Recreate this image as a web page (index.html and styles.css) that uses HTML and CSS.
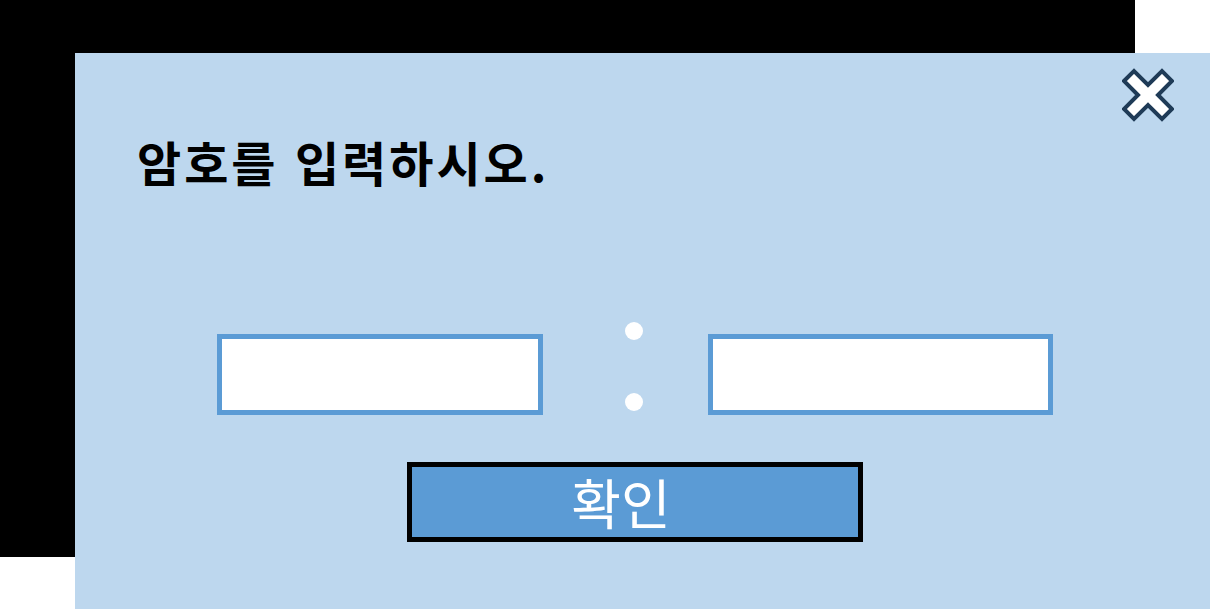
FILE: index.html
```html
<!DOCTYPE html>
<html lang="ko">
<head>
  <meta charset="UTF-8" />
  <meta name="viewport" content="width=device-width, initial-scale=1.0" />
  <title>암호 입력</title>
  <link rel="stylesheet" href="styles.css">
</head>
<body>
  <div class="backdrop"></div>

  <div class="dialog">
    <button class="close-btn" aria-label="닫기">
      <svg width="52" height="54" viewBox="0 0 52 54">
        <polygon points="2,13 12,3 26,17 40,3 50,13 36,27 50,41 40,51 26,37 12,51 2,41 16,27"
                 fill="#ffffff" stroke="#1f3b57" stroke-width="4" stroke-linejoin="miter" />
      </svg>
    </button>

    <h1 class="title">암호를 입력하시오.</h1>

    <div class="code-row">
      <input type="text" class="code-input first">
      <div class="colon">
        <span class="dot"></span>
        <span class="dot"></span>
      </div>
      <input type="text" class="code-input second">
    </div>

    <div class="actions">
      <button class="confirm-btn">확인</button>
    </div>
  </div>
</body>
</html>
```

FILE: styles.css
```css
body {
  margin: 0;
  background: #ffffff;
  font-family: "Noto Sans CJK KR", "Noto Sans", sans-serif;
  width: 1210px;
  height: 609px;
  overflow: hidden;
}

.backdrop {
  width: 1135px;
  height: 557px;
  background: #000000;
}

.dialog {
  position: absolute;
  top: 53px;
  left: 75px;
  width: 1135px;
  height: 556px;
  background: #bdd7ee;
  box-sizing: border-box;
  padding: 0 0 0 62px;
}

.close-btn {
  position: absolute;
  top: 15px;
  right: 36px;
  padding: 0;
  border: none;
  background: none;
  cursor: pointer;
}

.close-btn svg {
  display: block;
}

.title {
  margin: 0;
  padding-top: 76px;
  font-size: 48px;
  font-weight: bold;
  letter-spacing: 3px;
  line-height: 64px;
  color: #000000;
}

.code-row {
  display: flex;
  align-items: flex-start;
  margin-top: 129px;
  margin-left: 80px;
}

.code-input {
  box-sizing: border-box;
  height: 81px;
  margin-top: 12px;
  border: 5px solid #5b9bd5;
  background: #ffffff;
  outline: none;
}

.code-input.first {
  width: 326px;
}

.code-input.second {
  width: 345px;
}

.colon {
  width: 165px;
  display: flex;
  flex-direction: column;
  align-items: center;
  gap: 53px;
  padding-left: 16px;
  box-sizing: border-box;
}

.dot {
  width: 18px;
  height: 18px;
  border-radius: 50%;
  background: #ffffff;
}

.actions {
  margin-top: 47px;
  margin-left: 270px;
}

.confirm-btn {
  box-sizing: border-box;
  width: 456px;
  height: 80px;
  border: 5px solid #000000;
  background: #5b9bd5;
  color: #ffffff;
  font-family: "Noto Sans CJK KR", "Noto Sans", sans-serif;
  font-size: 54px;
  font-weight: normal;
  line-height: 1;
  padding: 0 28px 0 0;
  cursor: pointer;
}
```
